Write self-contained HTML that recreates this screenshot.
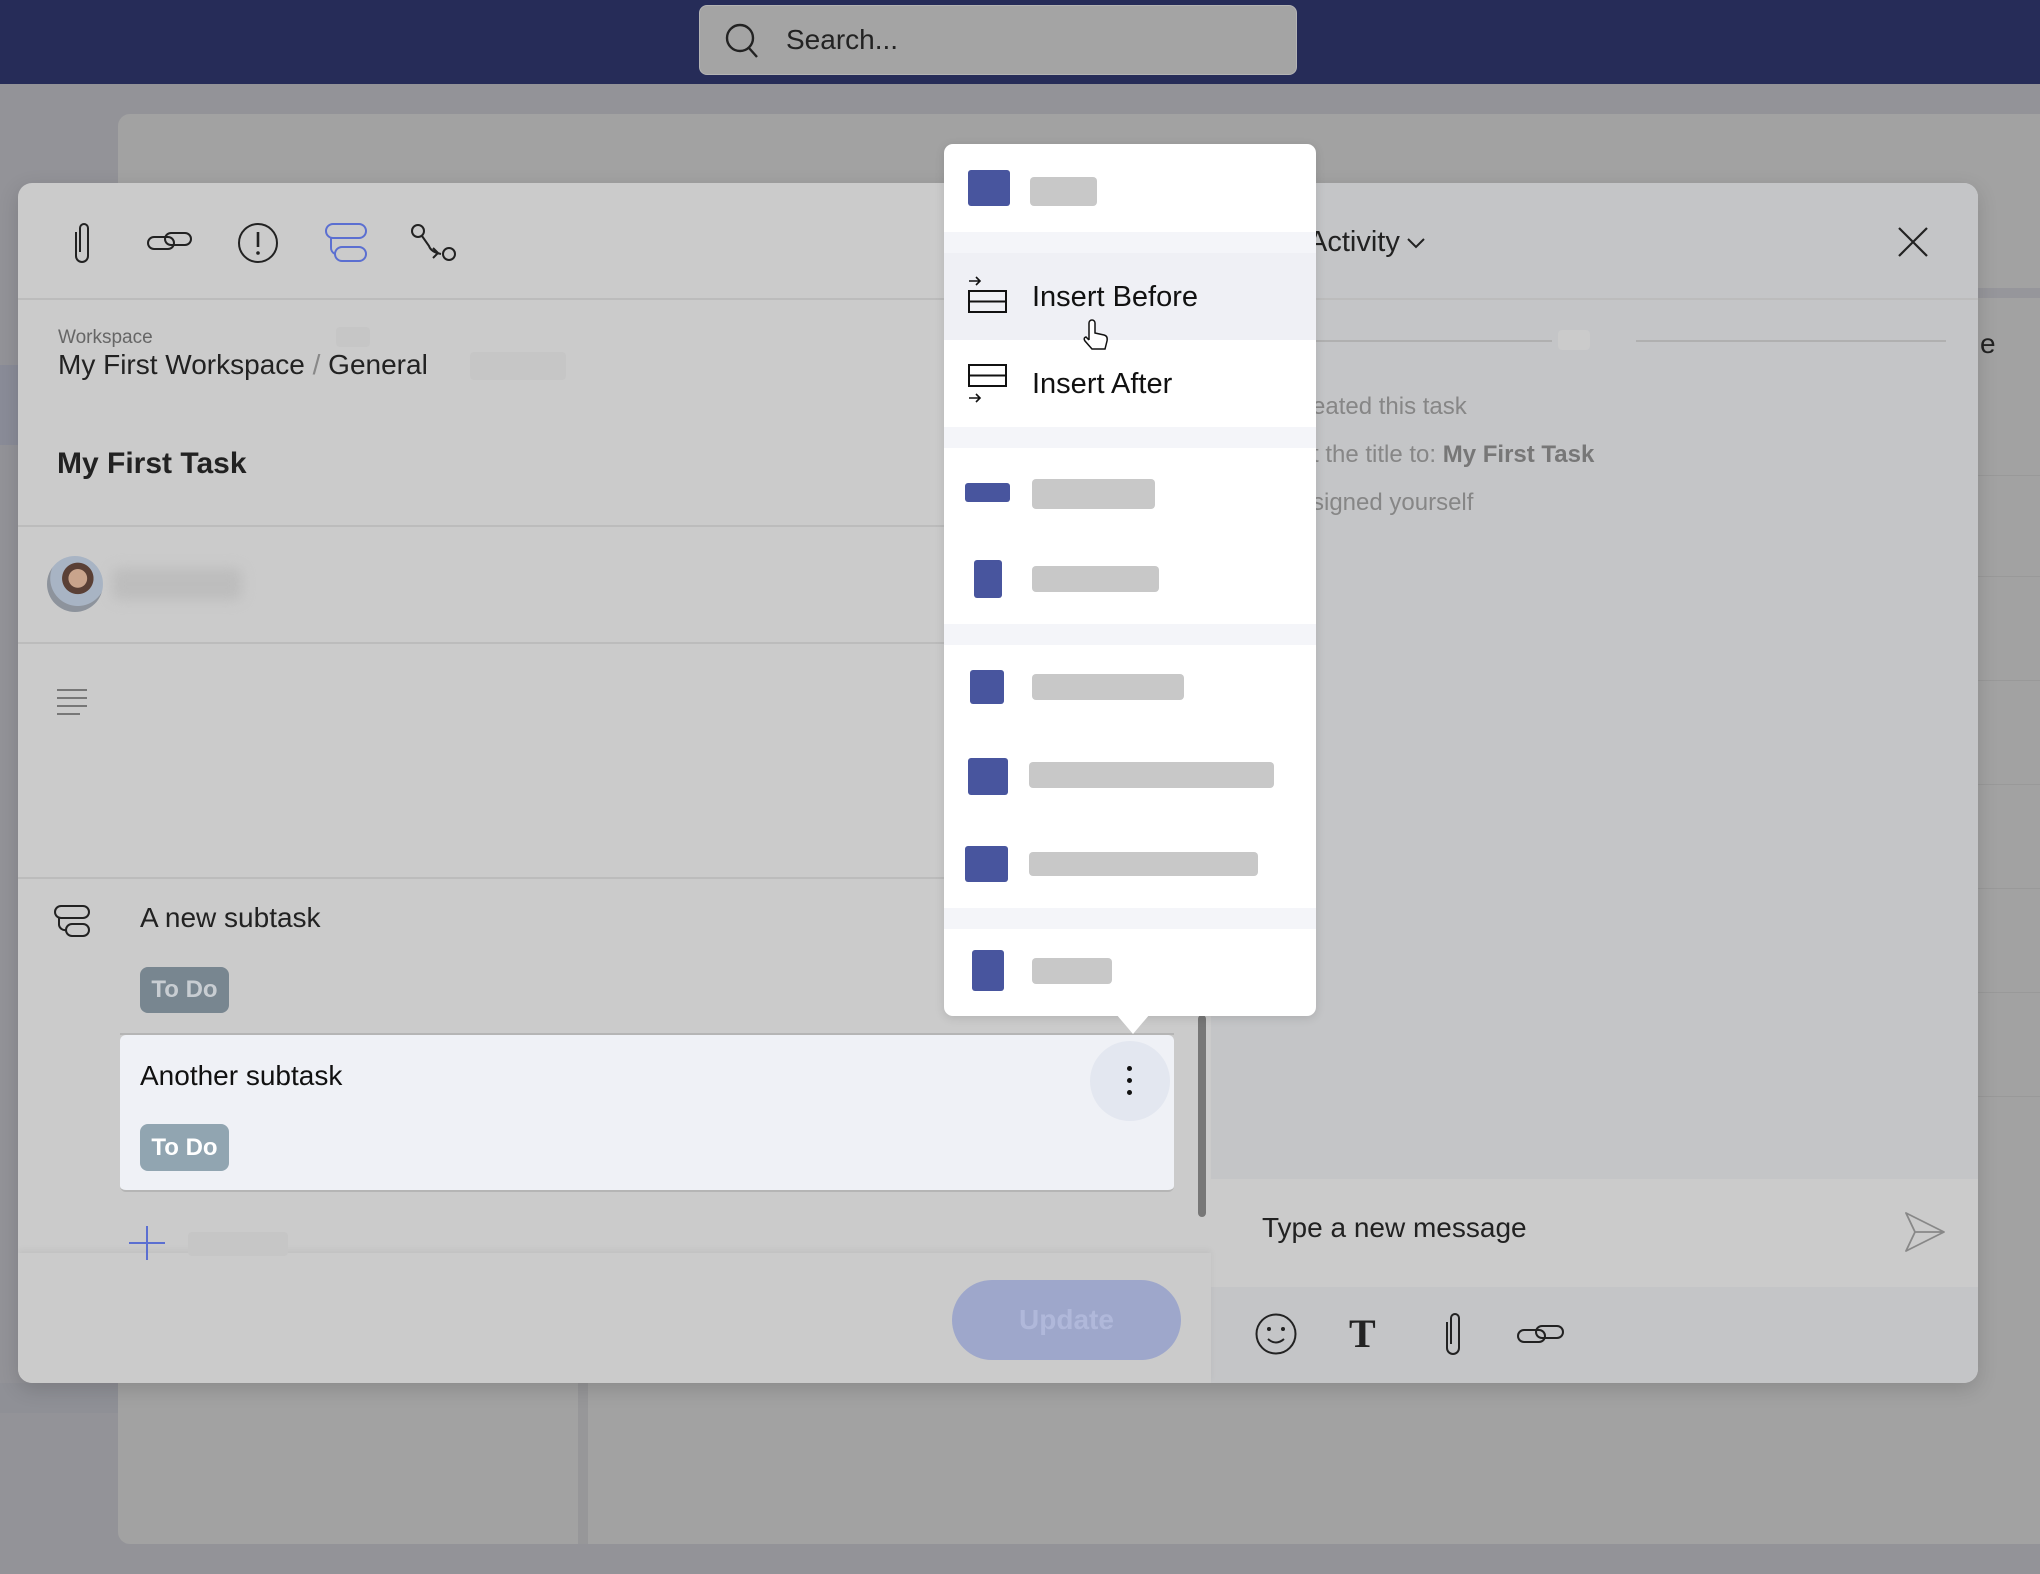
<!DOCTYPE html>
<html><head><meta charset="utf-8"><style>
*{box-sizing:border-box;margin:0;padding:0}
body{width:2040px;height:1574px;overflow:hidden;background:#939398;font-family:"Liberation Sans",Arial,sans-serif;position:relative}
.a{position:absolute}
svg{position:absolute;overflow:visible}
.bar{position:absolute;background:#c8c8c8;border-radius:4px}
.bl{position:absolute;background:#48559e;border-radius:3px}
.sep{position:absolute;left:0;right:0;background:#f4f5f9}
</style></head><body>
<div class="a" style="left:0;top:0;width:2040px;height:84px;background:#262c58"></div>
<div class="a" style="left:699px;top:5px;width:598px;height:70px;background:#a4a4a4;border-radius:8px;border:1px solid #b4b4b4"></div>
<svg style="left:724px;top:22px" width="36" height="38"><circle cx="16" cy="16" r="13" fill="none" stroke="#222" stroke-width="2.4"/><line x1="25" y1="26" x2="33" y2="35" stroke="#222" stroke-width="2.4"/></svg>
<div class="a" style="left:786px;top:24px;font-size:28px;color:#222">Search...</div>
<div class="a" style="left:0;top:84px;width:2040px;height:1460px;background:#939398"></div>
<div class="a" style="left:118px;top:114px;width:1922px;height:1430px;background:#a2a2a2;border-radius:12px 0 0 12px"></div>
<div class="a" style="left:0;top:365px;width:18px;height:80px;background:#8a8c98"></div>
<div class="a" style="left:1978px;top:288px;width:62px;height:10px;background:#96969b"></div>
<div class="a" style="left:1980px;top:328px;font-size:28px;color:#222">e</div>
<div class="a" style="left:1978px;top:475px;width:62px;height:1px;background:#999"></div>
<div class="a" style="left:1978px;top:576px;width:62px;height:1px;background:#999"></div>
<div class="a" style="left:1978px;top:680px;width:62px;height:1px;background:#999"></div>
<div class="a" style="left:1978px;top:784px;width:62px;height:1px;background:#999"></div>
<div class="a" style="left:1978px;top:888px;width:62px;height:1px;background:#999"></div>
<div class="a" style="left:1978px;top:992px;width:62px;height:1px;background:#999"></div>
<div class="a" style="left:1978px;top:1096px;width:62px;height:1px;background:#999"></div>
<div class="a" style="left:578px;top:1383px;width:10px;height:161px;background:#979799"></div>
<div class="a" style="left:0;top:1383px;width:118px;height:30px;background:#8f9096"></div>
<div class="a" style="left:0;top:1544px;width:2040px;height:30px;background:#939398"></div>
<div class="a" style="left:18px;top:183px;width:1960px;height:1200px;background:#cbcbcb;border-radius:14px;overflow:hidden;box-shadow:0 6px 20px rgba(0,0,0,.15)">
  <div class="a" style="left:1193px;top:0;width:767px;height:1200px;background:#c4c5c7"></div>
  <div class="a" style="left:1193px;top:996px;width:767px;height:108px;background:#cbcbcb"></div>
  <div class="a" style="left:0;top:115px;width:1960px;height:2px;background:#bcbcbc"></div>
  <div class="a" style="left:0;top:342px;width:1193px;height:2px;background:#bcbcbc"></div>
  <div class="a" style="left:0;top:459px;width:1193px;height:2px;background:#bcbcbc"></div>
  <div class="a" style="left:0;top:694px;width:1193px;height:2px;background:#bcbcbc"></div>
  <div class="a" style="left:0;top:1070px;width:1193px;height:130px;background:#cbcbcb;box-shadow:0 -3px 6px rgba(0,0,0,.05)"></div>
</div>
<svg style="left:70px;top:222px" width="24" height="42"><path d="M6 10 V34 a6 6 0 0 0 12 0 V6 a4 4 0 0 0 -8 0 V30" fill="none" stroke="#222" stroke-width="2"/></svg>
<svg style="left:147px;top:230px" width="46" height="24"><rect x="1" y="7" width="26" height="12" rx="6" fill="none" stroke="#222" stroke-width="2"/><rect x="18" y="3" width="26" height="12" rx="6" fill="none" stroke="#222" stroke-width="2"/></svg>
<svg style="left:237px;top:222px" width="42" height="42"><circle cx="21" cy="21" r="19" fill="none" stroke="#222" stroke-width="2"/><line x1="21" y1="10" x2="21" y2="25" stroke="#222" stroke-width="2.6"/><circle cx="21" cy="31" r="1.8" fill="#222"/></svg>
<svg style="left:325px;top:223px" width="44" height="40"><rect x="1" y="1" width="40" height="14" rx="7" fill="none" stroke="#5b6fd1" stroke-width="2"/><rect x="10" y="24" width="31" height="14" rx="7" fill="none" stroke="#5b6fd1" stroke-width="2"/><path d="M6 15 V24 a7 7 0 0 0 4 7" fill="none" stroke="#5b6fd1" stroke-width="2"/></svg>
<svg style="left:411px;top:224px" width="46" height="38"><circle cx="7" cy="7" r="6" fill="none" stroke="#222" stroke-width="2"/><circle cx="38" cy="30" r="6" fill="none" stroke="#222" stroke-width="2"/><path d="M11 12 L18 22 Q20 28 30 30" fill="none" stroke="#222" stroke-width="2"/><path d="M22 24 l5 5 M22 34 l5 -5" stroke="#222" stroke-width="2"/></svg>
<div class="a" style="left:58px;top:327px;font-size:19px;color:#666">Workspace</div>
<div class="a" style="left:58px;top:349px;font-size:28px;color:#222">My First Workspace <span style="color:#888">/</span> General</div>
<div class="a" style="left:470px;top:352px;width:96px;height:28px;background:#c6c6c6;border-radius:4px"></div>
<div class="a" style="left:336px;top:327px;width:34px;height:20px;background:#c6c6c6;border-radius:4px"></div>
<div class="a" style="left:57px;top:447px;font-size:30px;font-weight:bold;color:#222">My First Task</div>
<div class="a" style="left:47px;top:556px;width:56px;height:56px;border-radius:50%;background:radial-gradient(circle at 55% 40%,#c9a48c 0 20%,#5a4036 21% 34%,#a8b4c4 35% 60%,#8d939c 61%)"></div>
<div class="a" style="left:112px;top:568px;width:130px;height:32px;background:#bdbdbd;border-radius:8px;filter:blur(6px)"></div>
<svg style="left:57px;top:689px" width="32" height="30"><path d="M0 1H30M0 9H30M0 17H30M0 25H23" stroke="#777" stroke-width="2"/></svg>
<svg style="left:54px;top:905px" width="38" height="32"><rect x="1" y="1" width="34" height="12" rx="6" fill="none" stroke="#222" stroke-width="2"/><rect x="12" y="19" width="23" height="12" rx="6" fill="none" stroke="#222" stroke-width="2"/><path d="M5 13 V20 a6 6 0 0 0 7 5" fill="none" stroke="#222" stroke-width="2"/></svg>
<div class="a" style="left:140px;top:902px;font-size:28px;color:#222">A new subtask</div>
<div class="a" style="left:140px;top:967px;width:89px;height:46px;background:#788690;border-radius:8px;color:#c8cdd2;font-size:24px;font-weight:bold;line-height:46px;text-align:center">To Do</div>
<div class="a" style="left:120px;top:1033px;width:1054px;height:2px;background:#b5b5b5"></div>
<div class="a" style="left:120px;top:1035px;width:1054px;height:157px;background:#eff1f6;border-radius:6px;border-bottom:2px solid #b5b5b5"></div>
<div class="a" style="left:140px;top:1060px;font-size:28px;color:#111">Another subtask</div>
<div class="a" style="left:140px;top:1124px;width:89px;height:47px;background:#91a5b1;border-radius:8px;color:#fff;font-size:24px;font-weight:bold;line-height:47px;text-align:center">To Do</div>
<div class="a" style="left:1090px;top:1041px;width:80px;height:80px;border-radius:50%;background:#e3e7f0"></div>
<div class="a" style="left:1127px;top:1066px;width:5px;height:5px;border-radius:50%;background:#111;box-shadow:0 12px 0 #111,0 24px 0 #111"></div>
<svg style="left:129px;top:1226px" width="36" height="34"><path d="M18 0V34M0 17H36" stroke="#5b6fd1" stroke-width="2"/></svg>
<div class="a" style="left:188px;top:1232px;width:100px;height:24px;background:#c6c6c6;border-radius:4px"></div>
<div class="a" style="left:1198px;top:1015px;width:8px;height:202px;background:#777;border-radius:4px"></div>
<div class="a" style="left:952px;top:1280px;width:229px;height:80px;background:#9ea7cb;border-radius:40px;color:#b0b8da;font-size:28px;font-weight:bold;line-height:80px;text-align:center">Update</div>
<div class="a" style="left:1308px;top:226px;font-size:29px;color:#222">Activity</div>
<svg style="left:1407px;top:237px" width="18" height="12"><path d="M1 2L9 10L17 2" fill="none" stroke="#222" stroke-width="2"/></svg>
<svg style="left:1898px;top:227px" width="30" height="30"><path d="M1 1L29 29M29 1L1 29" stroke="#222" stroke-width="2.2"/></svg>
<div class="a" style="left:1316px;top:340px;width:236px;height:2px;background:#b0b0b0"></div>
<div class="a" style="left:1558px;top:330px;width:32px;height:20px;background:#cbcbcb;border-radius:4px"></div>
<div class="a" style="left:1636px;top:340px;width:310px;height:2px;background:#b0b0b0"></div>
<div class="a" style="left:1312px;top:393px;font-size:24px;color:#868686">eated this task</div>
<div class="a" style="left:1312px;top:441px;font-size:24px;color:#868686">t the title to: <b style="color:#777">My First Task</b></div>
<div class="a" style="left:1312px;top:489px;font-size:24px;color:#868686">signed yourself</div>
<div class="a" style="left:1262px;top:1212px;font-size:28px;color:#222">Type a new message</div>
<svg style="left:1905px;top:1212px" width="40" height="40"><path d="M1 1L39 20L1 39L10 20Z M10 20H39" fill="none" stroke="#888" stroke-width="1.8" stroke-linejoin="round"/></svg>
<svg style="left:1255px;top:1313px" width="42" height="42"><ellipse cx="21" cy="21" rx="19.5" ry="19.5" fill="none" stroke="#222" stroke-width="2"/><circle cx="14" cy="16" r="2" fill="#222"/><circle cx="28" cy="16" r="2" fill="#222"/><path d="M13 26 Q21 33 29 26" fill="none" stroke="#222" stroke-width="2"/></svg>
<div class="a" style="left:1349px;top:1310px;font-family:'Liberation Serif',serif;font-weight:bold;font-size:40px;color:#222">T</div>
<svg style="left:1441px;top:1312px" width="24" height="44"><path d="M6 10 V36 a6 6 0 0 0 12 0 V6 a4 4 0 0 0 -8 0 V32" fill="none" stroke="#222" stroke-width="2"/></svg>
<svg style="left:1517px;top:1323px" width="48" height="24"><rect x="1" y="7" width="27" height="12" rx="6" fill="none" stroke="#222" stroke-width="2"/><rect x="19" y="3" width="27" height="12" rx="6" fill="none" stroke="#222" stroke-width="2"/></svg>
<div class="a" style="left:944px;top:144px;width:372px;height:872px;background:#fff;border-radius:9px;box-shadow:0 2px 10px rgba(0,0,0,.12);overflow:hidden">
  <div class="sep" style="top:88px;height:21px"></div>
  <div class="a" style="left:0;top:109px;width:372px;height:87px;background:#eff0f5"></div>
  <div class="sep" style="top:283px;height:21px"></div>
  <div class="sep" style="top:480px;height:21px"></div>
  <div class="sep" style="top:764px;height:21px"></div>
</div>
<svg style="left:1116px;top:1014px" width="34" height="22"><path d="M0 0L17 20L34 0Z" fill="#fff"/></svg>
<div class="bl" style="left:968px;top:170px;width:42px;height:36px"></div><div class="bar" style="left:1030px;top:177px;width:67px;height:29px"></div>
<svg style="left:968px;top:277px" width="40" height="36"><path d="M1 4H12M8 0L12 4L8 8" fill="none" stroke="#111" stroke-width="1.6"/><rect x="1" y="14" width="37" height="21" fill="none" stroke="#111" stroke-width="2"/><line x1="1" y1="24.5" x2="38" y2="24.5" stroke="#111" stroke-width="2"/></svg>
<div class="a" style="left:1032px;top:281px;font-size:29px;color:#111">Insert Before</div>
<svg style="left:1080px;top:318px" width="30" height="36"><path d="M9 22 V5 a3 3 0 0 1 6 0 V15 l9 2 q4 1 3 6 l-2 8 H12 l-7 -8 q-2 -3 1 -4 l3 3" fill="#fff" stroke="#111" stroke-width="1.5"/></svg>
<svg style="left:968px;top:364px" width="40" height="40"><rect x="1" y="1" width="37" height="21" fill="none" stroke="#111" stroke-width="2"/><line x1="1" y1="11.5" x2="38" y2="11.5" stroke="#111" stroke-width="2"/><path d="M1 34H12M8 30L12 34L8 38" fill="none" stroke="#111" stroke-width="1.6"/></svg>
<div class="a" style="left:1032px;top:368px;font-size:29px;color:#111">Insert After</div>
<div class="bl" style="left:965px;top:483px;width:45px;height:19px"></div><div class="bar" style="left:1032px;top:479px;width:123px;height:30px"></div>
<div class="bl" style="left:974px;top:560px;width:28px;height:38px"></div><div class="bar" style="left:1032px;top:566px;width:127px;height:26px"></div>
<div class="bl" style="left:970px;top:670px;width:34px;height:34px"></div><div class="bar" style="left:1032px;top:674px;width:152px;height:26px"></div>
<div class="bl" style="left:968px;top:758px;width:40px;height:37px"></div><div class="bar" style="left:1029px;top:762px;width:245px;height:26px"></div>
<div class="bl" style="left:965px;top:846px;width:43px;height:36px"></div><div class="bar" style="left:1029px;top:852px;width:229px;height:24px"></div>
<div class="bl" style="left:972px;top:950px;width:32px;height:41px"></div><div class="bar" style="left:1032px;top:958px;width:80px;height:26px"></div>
</body></html>
